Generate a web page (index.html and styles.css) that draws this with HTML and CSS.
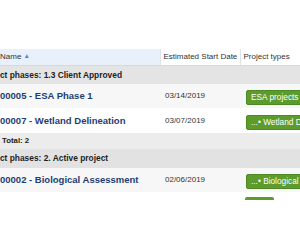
FILE: index.html
```html
<!DOCTYPE html>
<html lang="en">
<head>
    <meta charset="UTF-8">
    <meta name="viewport" content="width=device-width, initial-scale=1.0">
    <title>Projects</title>
    <link rel="stylesheet" href="styles.css">
</head>
<body>
<div class="grid-wrap">
  <table class="project-grid">
    <colgroup>
      <col class="col-name">
      <col class="col-date">
      <col class="col-type">
    </colgroup>
    <thead>
      <tr class="head-row">
        <th class="sorted">Name <span class="sort-arrow">&#9650;</span></th>
        <th>Estimated Start Date</th>
        <th>Project types</th>
      </tr>
    </thead>
    <tbody>
      <!-- group: 1.3 Client Approved -->
      <tr class="group-row">
        <td colspan="3"><span class="group-label">Project phases: 1.3 Client Approved</span></td>
      </tr>
      <tr class="item-row odd">
        <td class="name-cell">00005 - ESA Phase 1</td>
        <td class="date-cell">03/14/2019</td>
        <td class="type-cell"><span class="badge">ESA projects</span></td>
      </tr>
      <tr class="item-row">
        <td class="name-cell">00007 - Wetland Delineation</td>
        <td class="date-cell">03/07/2019</td>
        <td class="type-cell"><span class="badge">...&#8226; Wetland Delineation</span></td>
      </tr>
      <tr class="total-row">
        <td colspan="3">Total: 2</td>
      </tr>

      <!-- group: 2. Active project -->
      <tr class="group-row second">
        <td colspan="3"><span class="group-label">Project phases: 2. Active project</span></td>
      </tr>
      <tr class="item-row odd">
        <td class="name-cell">00002 - Biological Assessment</td>
        <td class="date-cell">02/06/2019</td>
        <td class="type-cell"><span class="badge">...&#8226; Biological Assessment</span></td>
      </tr>
    </tbody>
  </table>
  <div class="badge-peek"></div>
</div>
</body>
</html>
```

FILE: styles.css
```css
/* Page */
html, body {
    margin: 0;
    padding: 0;
    background: #ffffff;
    overflow: hidden;
}

body {
    font-family: "Liberation Sans", Arial, Helvetica, sans-serif;
    color: #333;
}

.grid-wrap {
    padding-top: 49px;
    width: 300px;
    overflow: hidden;
}

/* Table */
.project-grid {
    border-collapse: collapse;
    table-layout: fixed;
    width: 400px;
}

.col-name { width: 160px; }
.col-date { width: 80px; }
.col-type { width: 160px; }

.project-grid th,
.project-grid td {
    padding: 0;
    white-space: nowrap;
    overflow: hidden;
    vertical-align: middle;
}

/* Header */
.head-row th {
    height: 16px;
    font-size: 8px;
    font-weight: normal;
    text-align: left;
    color: #333;
    background-color: #ffffff;
    border-left: 1px solid #dde3ea;
    border-bottom: 1px solid #d8d8d8;
    padding-left: 3px;
    box-sizing: border-box;
}

.head-row th.sorted {
    background-color: #e8f0fb;
    border-left: none;
    padding-left: 0;
}

.sort-arrow {
    font-size: 6.5px;
    color: #4f86c9;
    vertical-align: 1px;
}

/* Group rows */
.group-row td {
    height: 18px;
    background-color: #e4e4e4;
    font-size: 8.4px;
    font-weight: bold;
    color: #1e1e1e;
}

.group-row.second td {
    height: 19px;
    background-color: #e2e2e2;
}

.group-label {
    display: inline-block;
    margin-left: -21px;
}

/* Item rows */
.item-row td {
    height: 25px;
    background-color: #ffffff;
}

.item-row.odd td {
    height: 24px;
    background-color: #f7f7f7;
}

.name-cell {
    font-size: 9.5px;
    font-weight: bold;
    color: #1d3e73;
}

.date-cell {
    font-size: 8px;
    color: #333;
    padding-left: 5px !important;
}

.type-cell {
    padding-left: 6px !important;
}

.badge {
    display: inline-block;
    height: 15px;
    line-height: 13px;
    padding: 0 4px;
    font-size: 8.3px;
    color: #ffffff;
    background-color: #5d9b2d;
    border: 1px solid #4e8a22;
    border-radius: 2px;
    box-sizing: border-box;
}

/* Total row */
.total-row td {
    height: 16px;
    background-color: #ececec;
    font-size: 7.8px;
    font-weight: bold;
    color: #222;
    padding-left: 2px;
}

/* Next badge peeking below */
.badge-peek {
    margin: 5px 0 0 245px;
    width: 29px;
    height: 3px;
    background-color: #5d9b2d;
    border-radius: 2px 2px 0 0;
}
```
